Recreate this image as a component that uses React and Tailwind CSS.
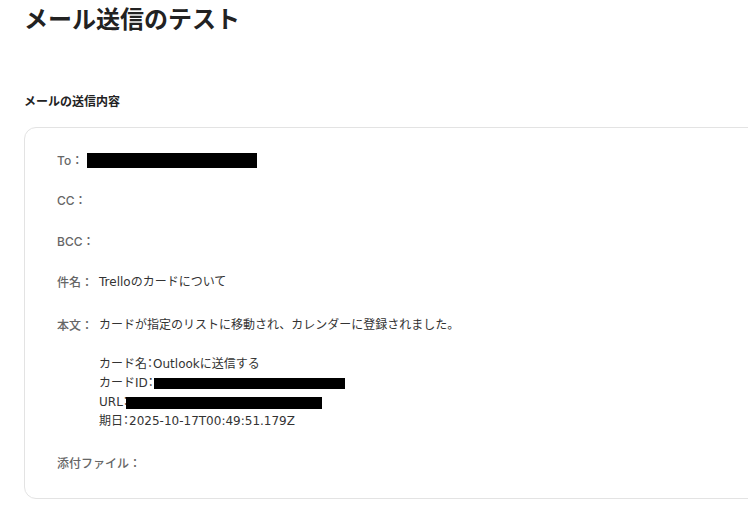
export default function App() {
  const font = { fontFamily: 'Inter, "Noto Sans CJK JP", sans-serif' }
  const valueFont = { fontFamily: '"DejaVu Sans", "Noto Sans CJK JP", sans-serif' }
  const Colon = () => <span className="[font-feature-settings:'palt']">：</span>
  return (
    <div className="w-[748px] h-[514px] overflow-hidden bg-white pl-6" style={font}>
      <h1 className="pt-[4px] text-[24px] leading-[32px] font-bold text-[#222]">メール送信のテスト</h1>
      <h2 className="mt-[58px] text-[12px] leading-[16px] font-bold text-[#222]">メールの送信内容</h2>
      <div className="mt-[17px] w-[800px] rounded-xl border border-[#e3e3e3] pl-8 pt-[23px] pb-[25px] text-[12px] leading-[19px]">
        <div className="flex items-center">
          <span className="font-medium text-[#666]">To：</span>
          <span className="ml-[4px] inline-block h-[15px] w-[170px] bg-black" />
        </div>
        <div className="mt-[21px] font-medium text-[#666]">CC：</div>
        <div className="mt-[22px] font-medium text-[#666]">BCC：</div>
        <div className="mt-[22px] flex">
          <span className="font-medium text-[#666]">件名：</span>
          <span className="ml-[6px] text-[#333]" style={valueFont}>Trelloのカードについて</span>
        </div>
        <div className="mt-[24px] flex">
          <span className="font-medium text-[#666]">本文：</span>
          <div className="ml-[6px] text-[#333]" style={valueFont}>
            <div>カードが指定のリストに移動され、カレンダーに登録されました。</div>
            <div className="h-[20px]" />
            <div>カード名<Colon />Outlookに送信する</div>
            <div className="flex items-center">
              カードID<Colon /><span className="inline-block h-[11px] w-[191px] bg-black" />
            </div>
            <div className="flex items-center">
              URL<Colon /><span className="-ml-[3px] inline-block h-[12px] w-[196px] bg-black" />
            </div>
            <div>期日<Colon />2025-10-17T00:49:51.179Z</div>
          </div>
        </div>
        <div className="mt-[23px] font-medium text-[#666]">添付ファイル：</div>
      </div>
    </div>
  )
}
